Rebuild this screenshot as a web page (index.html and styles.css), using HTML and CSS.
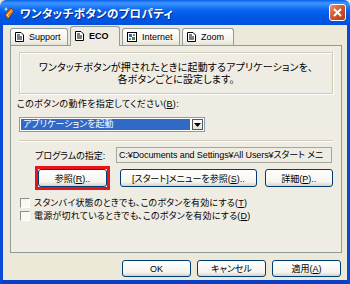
FILE: index.html
```html
<!DOCTYPE html>
<html lang="ja">
<head>
  <meta charset="UTF-8" />
  <title>ワンタッチボタンのプロパティ</title>
  <link rel="stylesheet" href="styles.css">
</head>
<body>
  <div class="window">
    <div class="titlebar">
      <svg class="app-icon" width="13" height="15" viewBox="0 0 13 15">
        <path d="M5 13 L2 9 L8 2 L11 5 Z" fill="#E88A2C" stroke="#7A3A0A" stroke-width="1"/>
        <path d="M6 11 L4 9 L8 5" fill="none" stroke="#FFD27A" stroke-width="1"/>
        <path d="M3 1 L3.7 2.8 L5.5 3 L3.7 3.6 L3 5.5 L2.3 3.6 L0.5 3 L2.3 2.8 Z" fill="#FFF6B0"/>
      </svg>
      <span class="title">ワンタッチボタンのプロパティ</span>
      <div class="close">
        <svg width="9" height="9" viewBox="0 0 9 9">
          <path d="M1 1 L8 8 M8 1 L1 8" stroke="#fff" stroke-width="2"/>
        </svg>
      </div>
    </div>

    <div class="frame">
      <div class="tabs">
        <div class="tab tab-support">
          <svg class="tab-icon" width="9" height="10" viewBox="0 0 9 10">
            <path d="M0.5 0.5 H6 L8.5 3 V9.5 H0.5 Z" fill="#fff" stroke="#000"/>
            <path d="M2 3 H5 M2 5 H7 M2 7 H7" stroke="#000"/>
          </svg>
          Support
        </div>
        <div class="tab tab-eco active">
          <svg class="tab-icon" width="9" height="10" viewBox="0 0 9 10">
            <path d="M0.5 0.5 H6 L8.5 3 V9.5 H0.5 Z" fill="#fff" stroke="#000"/>
            <path d="M2 3 H5 M2 5 H7 M2 7 H7" stroke="#000"/>
          </svg>
          ECO
        </div>
        <div class="tab tab-internet">
          <svg class="tab-icon" width="10" height="10" viewBox="0 0 10 10">
            <rect x="0.5" y="0.5" width="9" height="9" fill="#fff" stroke="#000"/>
            <rect x="2" y="2" width="3" height="3" fill="#2F5FC0"/>
            <rect x="5" y="5" width="3" height="3" fill="#3A8F3A"/>
            <path d="M2 7 H4 M6 3 H8" stroke="#000"/>
          </svg>
          Internet
        </div>
        <div class="tab tab-zoom">
          <svg class="tab-icon" width="9" height="10" viewBox="0 0 9 10">
            <path d="M0.5 0.5 H6 L8.5 3 V9.5 H0.5 Z" fill="#fff" stroke="#000"/>
            <path d="M2 3 H5 M2 5 H7 M2 7 H7" stroke="#000"/>
          </svg>
          Zoom
        </div>
      </div>

      <div class="panel">
        <div class="group">
          <p>ワンタッチボタンが押されたときに起動するアプリケーションを、<br>各ボタンごとに設定します。</p>
        </div>

        <div class="label">このボタンの動作を指定してください(<u>B</u>):</div>

        <div class="combo">
          <span class="combo-value">アプリケーションを起動</span>
          <span class="combo-btn">
            <svg width="7" height="4" viewBox="0 0 7 4"><path d="M0 0 H7 L3.5 4 Z" fill="#000"/></svg>
          </span>
        </div>

        <div class="sep"></div>

        <div class="prog-row">
          <span class="prog-label">プログラムの指定:</span>
          <div class="field">C:¥Documents and Settings¥All Users¥スタート メニ</div>
        </div>

        <div class="btn-row">
          <span class="mark"><button class="btn btn-browse">参照(<u>R</u>)..</button></span>
          <button class="btn btn-start">[スタート]メニューを参照(<u>S</u>)..</button>
          <button class="btn btn-detail">詳細(<u>P</u>)..</button>
        </div>

        <div class="check check-first"><span class="box"></span>スタンバイ状態のときでも、このボタンを有効にする(<u>T</u>)</div>
        <div class="check"><span class="box"></span>電源が切れているときでも、このボタンを有効にする(<u>D</u>)</div>
      </div>

      <div class="footer">
        <button class="btn">OK</button>
        <button class="btn">キャンセル</button>
        <button class="btn">適用(<u>A</u>)</button>
      </div>
    </div>
  </div>
</body>
</html>
```

FILE: styles.css
```css
body {
  margin: 0;
  font-family: "Liberation Sans", "Noto Sans CJK JP", sans-serif;
  font-size: 9px;
  font-feature-settings: "palt";
  color: #000;
}
.window {
  width: 350px;
  height: 284px;
  background: #ECE9D8;
  overflow: hidden;
}

/* title bar */
.titlebar {
  height: 25px;
  display: flex;
  align-items: center;
  padding: 0 4px 0 3px;
  border-radius: 6px 6px 0 0;
  background: linear-gradient(to bottom, #0A5EEB 0px, #3D95FF 3px, #2783FB 6px, #0B66F0 10px, #0058E6 16px, #0055E2 22px, #0150D8 25px);
  box-sizing: border-box;
}
.app-icon {
  flex: none;
  margin-top: 1px;
}
.title {
  margin-left: 4px;
  color: #fff;
  font-size: 11.5px;
  font-weight: bold;
  text-shadow: 1px 1px 0 #0A2A8A;
  letter-spacing: 0.3px;
}
.close {
  margin-left: auto;
  width: 17px;
  height: 17px;
  box-sizing: border-box;
  border: 1px solid #fff;
  border-radius: 3px;
  background: linear-gradient(135deg, #E9906E, #D3542E 50%, #B8380F);
  display: flex;
  align-items: center;
  justify-content: center;
}

/* frame */
.frame {
  height: 259px;
  box-sizing: border-box;
  border-left: 3px solid #0A48D6;
  border-right: 3px solid #0A48D6;
  border-bottom: 4px solid #0A3FC4;
}

/* tabs */
.tabs {
  display: flex;
  align-items: flex-end;
  gap: 2px;
  height: 20px;
  margin-left: 7px;
  position: relative;
  z-index: 1;
}
.tab {
  height: 17px;
  box-sizing: border-box;
  border: 1px solid #919B9C;
  border-bottom: none;
  border-radius: 3px 3px 0 0;
  background: linear-gradient(#FFFFFF, #F3F2EC 70%, #E6E3D6);
  display: flex;
  align-items: center;
  padding-left: 4px;
  gap: 5px;
  font-size: 9px;
}
.tab-icon {
  flex: none;
}
.tab-support { width: 58px; }
.tab-eco { width: 50px; }
.tab-internet { width: 58px; }
.tab-zoom { width: 52px; }
.tab.active {
  height: 20px;
  margin-bottom: -1px;
  background: #EFEDE3;
  font-weight: bold;
  padding-bottom: 2px;
}

/* panel */
.panel {
  margin-left: 7px;
  width: 332px;
  height: 208px;
  box-sizing: border-box;
  border: 1px solid #919B9C;
  background: #EFEDE3;
  padding: 6px 8px 0 8px;
}
.group {
  width: 314px;
  height: 42px;
  box-sizing: border-box;
  border: 1px solid #CFCBB8;
  box-shadow: inset 1px 1px 0 #fff, 1px 1px 0 #fff;
  text-align: center;
}
.group p {
  margin: 0;
  padding-top: 9px;
  line-height: 12px;
  font-size: 10px;
  letter-spacing: 0.15px;
}
.label {
  margin: 4px 0 0 -2px;
  line-height: 12px;
  letter-spacing: 0.3px;
}

/* combo box */
.combo {
  margin-top: 7px;
  width: 186px;
  height: 15px;
  box-sizing: border-box;
  border: 1px solid #7F9DB9;
  background: #fff;
  display: flex;
  padding: 1px;
}
.combo-value {
  flex: 1;
  background: #316AC5;
  color: #fff;
  line-height: 11px;
  padding-left: 2px;
  margin-right: 2px;
}
.combo-btn {
  width: 11px;
  box-sizing: border-box;
  border: 1px solid #555550;
  background: linear-gradient(#FFFFFF, #E4E1D4);
  display: flex;
  align-items: center;
  justify-content: center;
}

.sep {
  margin-top: 8px;
  width: 314px;
  height: 1px;
  background: #CFCBB8;
  border-bottom: 1px solid #fff;
}

/* program row */
.prog-row {
  margin-top: 5px;
  display: flex;
  align-items: center;
}
.prog-label {
  width: 81px;
  padding-left: 16px;
}
.field {
  width: 216px;
  height: 16px;
  box-sizing: border-box;
  border: 1px solid #A5A59A;
  padding: 0 1px 0 2px;
  line-height: 14px;
  white-space: nowrap;
  letter-spacing: -0.1px;
}

/* buttons */
.btn {
  height: 18px;
  box-sizing: border-box;
  border: 1px solid #003C74;
  border-radius: 3px;
  background: linear-gradient(#FFFFFF, #F5F4EF 75%, #D8D2C6);
  font-family: inherit;
  font-size: 9px;
  font-feature-settings: "palt";
  color: #000;
  padding: 0;
}
.btn-row {
  margin-top: 6px;
  display: flex;
  align-items: center;
  padding-left: 16px;
}
.mark {
  display: flex;
  border: 3px solid #E8141B;
  margin: -3px 0;
}
.btn-browse { width: 69px; }
.btn-start { width: 138px; margin-left: 10px; }
.btn-detail { width: 69px; margin-left: 8px; }

/* checkboxes */
.check {
  display: flex;
  align-items: center;
  height: 13px;
  margin-left: 1px;
  letter-spacing: 0.2px;
}
.check-first {
  margin-top: 9px;
}
.box {
  width: 10px;
  height: 10px;
  box-sizing: border-box;
  border: 1px solid;
  border-color: #8E8E86 #FFFFFF #FFFFFF #8E8E86;
  background: #F8F8F4;
  margin-right: 4px;
}

/* dialog buttons */
.footer {
  display: flex;
  justify-content: flex-end;
  gap: 6px;
  margin-top: 7px;
  padding-right: 6px;
}
.footer .btn {
  width: 69px;
  height: 17px;
}
```
